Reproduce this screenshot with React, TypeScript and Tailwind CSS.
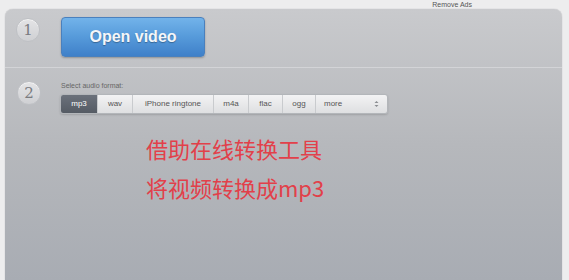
import React from "react";

const formats = [
  { label: "mp3", w: "w-[37px]" },
  { label: "wav", w: "w-[35px]" },
  { label: "iPhone ringtone", w: "w-[81px]" },
  { label: "m4a", w: "w-[35px]" },
  { label: "flac", w: "w-[34px]" },
  { label: "ogg", w: "w-[33px]" },
];

function StepBadge({ n }: { n: number }) {
  return (
    <div className="w-[24px] h-[24px] rounded-full bg-gradient-to-b from-[#e4e4e6] to-[#cfd0d3] border border-[#bfc1c5] shadow-[inset_0_1px_0_#f4f4f4] flex items-center justify-center text-[15px] text-[#7a7c80] font-['DejaVu_Serif',serif] leading-none shrink-0">
      {n}
    </div>
  );
}

export default function App() {
  return (
    <div className="w-[569px] h-[280px] bg-[#ededee] overflow-hidden font-['Liberation_Sans',sans-serif]">
      <div className="h-[9px] flex justify-end pr-[97px]">
        <span className="text-[7px] leading-[9px] text-[#555]">Remove Ads</span>
      </div>
      <div className="ml-[5px] w-[557px] h-[271px] rounded-t-[8px] bg-gradient-to-b from-[#c9cacd] via-[#b6b8bc] to-[#a8acb3] shadow-[0_0_1px_#9a9ca0]">
        {/* Step 1 */}
        <div className="h-[59px] flex items-start pt-[8px] pl-[11px] gap-[21px] border-b border-[#d3d4d7]">
          <div className="pt-[1px]">
            <StepBadge n={1} />
          </div>
          <button className="w-[144px] h-[40px] rounded-[4px] bg-gradient-to-b from-[#72b3ea] via-[#569ada] to-[#3f80c9] border border-[#4a80bd] shadow-[0_1px_2px_rgba(0,0,0,0.25)] text-[#f4f6f9] font-bold text-[16px] [text-shadow:0_1px_1px_rgba(0,0,0,0.3)]">
            Open video
          </button>
        </div>

        {/* Step 2 */}
        <div className="flex items-start pt-[13px] pl-[12px] gap-[19px]">
          <StepBadge n={2} />
          <div className="flex flex-col">
            <span className="text-[7px] leading-[9px] text-[#666] pl-[1px]">Select audio format:</span>
            <div className="mt-[4px] h-[20px] w-[328px] flex rounded-[3px] border border-[#b3b6ba] bg-gradient-to-b from-[#f3f3f4] to-[#dedfe1] shadow-[0_1px_2px_rgba(0,0,0,0.15)] overflow-hidden text-[8px] text-[#555]">
              {formats.map((f, i) => (
                <div
                  key={f.label}
                  className={`${f.w} h-full flex items-center justify-center border-r border-[#c9cbce] ${
                    i === 0 ? "bg-gradient-to-b from-[#6b717b] to-[#555b64] text-white" : ""
                  }`}
                >
                  {f.label}
                </div>
              ))}
              <div className="flex-1 h-full flex items-center justify-between pl-[8px] pr-[8px]">
                <span>more</span>
                <svg width="5" height="8" viewBox="0 0 5 8">
                  <path d="M0.5 3 L2.5 1 L4.5 3 Z" fill="#8a8c90" />
                  <path d="M0.5 5 L2.5 7 L4.5 5 Z" fill="#8a8c90" />
                </svg>
              </div>
            </div>
          </div>
        </div>

        <div className="pl-[141px] pt-[15px] text-[22px] leading-[39px] text-[#e2404a] font-['Noto_Sans_CJK_SC','Liberation_Sans',sans-serif]">
          <p>借助在线转换工具</p>
          <p>将视频转换成mp3</p>
        </div>
      </div>
    </div>
  );
}
